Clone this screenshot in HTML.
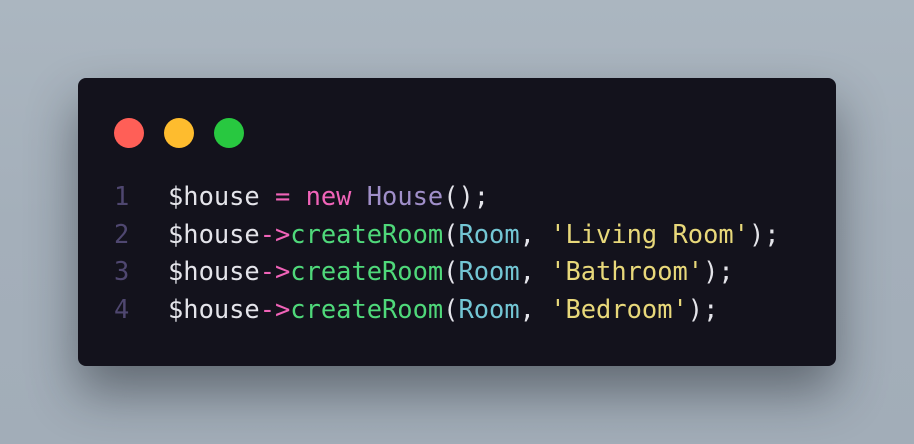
<!DOCTYPE html>
<html><head><style>
html,body{margin:0;padding:0}
body{width:914px;height:444px;background:linear-gradient(180deg,#abb6c0 0%,#a4afba 50%,#a2adb8 100%);position:relative;overflow:hidden}
.card{position:absolute;left:78px;top:78px;width:758px;height:288px;background:#13121c;border-radius:8px;box-shadow:0 26px 50px rgba(20,24,32,0.45)}
.dot{position:absolute;top:118px;width:30px;height:30px;border-radius:50%}
.code{position:absolute;left:0;top:178px;font-family:"DejaVu Sans Mono","Liberation Mono",monospace;font-size:25.4px;line-height:37.7px;color:#e4e4ea;white-space:pre}
.ln{display:inline-block;width:168px;box-sizing:border-box;padding-left:114px;color:#4f4770}
.p{color:#f063b8}.c{color:#a08fc9}.g{color:#4fd87a}.b{color:#73c6d4}.y{color:#e8d87a}
</style></head><body>
<div class="card"></div>
<div class="dot" style="left:114px;background:#ff5f57"></div>
<div class="dot" style="left:164px;background:#febc2e"></div>
<div class="dot" style="left:214px;background:#28c840"></div>
<div class="code"><span class="ln">1</span>$house <span class="p">=</span> <span class="p">new</span> <span class="c">House</span>();
<span class="ln">2</span>$house<span class="p">-&gt;</span><span class="g">createRoom</span>(<span class="b">Room</span>, <span class="y">'Living Room'</span>);
<span class="ln">3</span>$house<span class="p">-&gt;</span><span class="g">createRoom</span>(<span class="b">Room</span>, <span class="y">'Bathroom'</span>);
<span class="ln">4</span>$house<span class="p">-&gt;</span><span class="g">createRoom</span>(<span class="b">Room</span>, <span class="y">'Bedroom'</span>);</div>
</body></html>
